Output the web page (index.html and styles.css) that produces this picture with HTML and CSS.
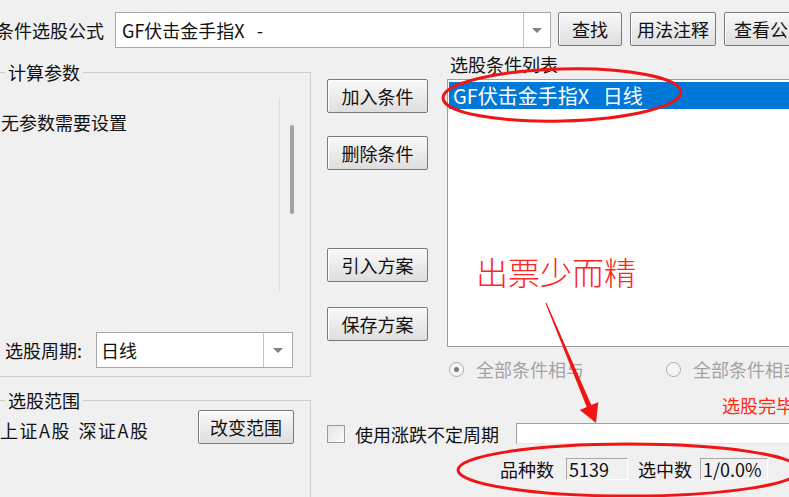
FILE: index.html
```html
<!DOCTYPE html>
<html lang="zh-CN">
<head>
    <meta charset="UTF-8">
    <meta name="viewport" content="width=device-width, initial-scale=1.0">
    <title>条件选股</title>
    <link rel="stylesheet" href="styles.css">
</head>
<body>
    <div class="top">
        <span class="top-label">条件选股公式</span>
        <div class="combo formula">
            <span class="combo-text">GF伏击金手指X&nbsp;&nbsp;&nbsp;-</span>
            <span class="combo-btn"><i class="tri"></i></span>
        </div>
        <button class="btn btn-find">查找</button>
        <button class="btn btn-note">用法注释</button>
        <button class="btn btn-view">查看公式</button>
    </div>

    <div class="main">
        <div class="left">
            <div class="group params">
                <span class="group-title">计算参数</span>
                <div class="param-area">
                    <div class="param-pane">无参数需要设置</div>
                    <div class="thumb"></div>
                </div>
                <div class="period-row">
                    <span class="period-label">选股周期:</span>
                    <div class="combo period">
                        <span class="combo-text">日线</span>
                        <span class="combo-btn"><i class="tri"></i></span>
                    </div>
                </div>
            </div>
            <div class="group range">
                <span class="group-title">选股范围</span>
                <div class="range-row">
                    <span class="range-text">上证A股 深证A股</span>
                    <button class="btn btn-range">改变范围</button>
                </div>
            </div>
        </div>

        <div class="right">
            <div class="upper">
                <div class="actions">
                    <button class="btn act-add">加入条件</button>
                    <button class="btn act-del">删除条件</button>
                    <button class="btn act-load">引入方案</button>
                    <button class="btn act-save">保存方案</button>
                </div>
                <div class="list-col">
                    <div class="list-label">选股条件列表</div>
                    <div class="list">
                        <div class="list-item selected">GF伏击金手指X&nbsp;&nbsp;&nbsp;日线</div>
                    </div>
                </div>
            </div>

            <div class="radios">
                <span class="radio checked"></span>
                <span class="radio-label first">全部条件相与</span>
                <span class="radio"></span>
                <span class="radio-label">全部条件相或</span>
            </div>

            <div class="done">选股完毕</div>

            <div class="check-row">
                <span class="checkbox"></span>
                <span class="check-label">使用涨跌不定周期</span>
                <span class="field"></span>
            </div>

            <div class="status-row">
                <span class="stat-label">品种数</span>
                <span class="stat-box total">5139</span>
                <span class="stat-label picked">选中数</span>
                <span class="stat-box ratio">1/0.0%</span>
            </div>
        </div>
    </div>

    <!-- 标注 -->
    <div class="note">出票少而精</div>
    <svg class="marks" width="789" height="497" viewBox="0 0 789 497">
        <ellipse cx="562" cy="95" rx="119" ry="26" fill="none" stroke="#f01414" stroke-width="3" transform="rotate(-1.5 562 95)"/>
        <ellipse cx="629" cy="470" rx="171" ry="26" fill="none" stroke="#f01414" stroke-width="3"/>
        <polygon points="545.5,303.2 546.5,302.8 591.3,405 598.3,402.2 596,423 579.8,409.9 586.7,407" fill="#f01414"/>
    </svg>
</body>
</html>
```

FILE: styles.css
```css
body {
    margin: 0;
    width: 789px;
    height: 497px;
    overflow: hidden;
    position: relative;
    background: #f0f0f0;
    font-family: "Noto Sans CJK SC", sans-serif;
    font-size: 18px;
    color: #111;
}
.top {
    display: flex;
    align-items: flex-start;
    height: 50px;
    padding-top: 12px;
    box-sizing: border-box;
}
.top > * {
    flex-shrink: 0;
}
.top-label {
    margin-left: -4px;
    width: 119px;
    line-height: 36px;
    white-space: nowrap;
}
.combo {
    display: flex;
    border: 1px solid #a8a8a8;
    background: #fff;
    box-sizing: border-box;
    height: 36px;
}
.combo-text {
    flex: 1;
    padding-left: 6px;
    line-height: 34px;
    white-space: nowrap;
}
.combo-btn {
    width: 26px;
    border-left: 1px solid #c4c4c4;
    display: flex;
    align-items: center;
    justify-content: center;
}
.tri {
    border-left: 5px solid transparent;
    border-right: 5px solid transparent;
    border-top: 5px solid #808080;
}
.formula {
    width: 436px;
}
.btn {
    font-family: inherit;
    font-size: 18px;
    color: #111;
    height: 34px;
    padding: 0;
    border: 1px solid #7a7a7a;
    border-radius: 2px;
    background: linear-gradient(#f9f9f9, #dedede);
    box-shadow: inset 1px 1px 0 #fff;
    line-height: 30px;
    white-space: nowrap;
}
.btn-find {
    margin-left: 7px;
    width: 64px;
}
.btn-note {
    margin-left: 8px;
    width: 86px;
}
.btn-view {
    margin-left: 8px;
    width: 92px;
}
.main {
    display: flex;
}
.left {
    width: 317px;
    margin-left: -6px;
    flex-shrink: 0;
}
.group {
    position: relative;
    border: 1px solid #cdcdcd;
    box-sizing: border-box;
}
.group-title {
    position: absolute;
    top: -12px;
    left: 10px;
    padding: 0 3px;
    background: #f0f0f0;
    line-height: 22px;
}
.params {
    margin-top: 22px;
    height: 305px;
}
.param-area {
    display: flex;
    margin-top: 25px;
}
.param-pane {
    width: 285px;
    height: 194px;
    border-right: 1px solid #dedede;
    padding: 13px 0 0 6px;
    box-sizing: border-box;
    line-height: 22px;
}
.thumb {
    width: 4px;
    height: 89px;
    margin: 27px 0 0 10px;
    background: #a2a2a2;
    border-radius: 2px;
}
.period-row {
    display: flex;
    align-items: center;
    margin-top: 40px;
    height: 36px;
}
.period-label {
    width: 101px;
    padding-left: 10px;
    box-sizing: border-box;
    flex-shrink: 0;
}
.period {
    width: 197px;
    flex-shrink: 0;
}
.period .combo-text {
    padding-left: 4px;
}
.period .combo-btn {
    width: 28px;
}
.range {
    margin-top: 23px;
    height: 140px;
}
.range-row {
    display: flex;
    align-items: flex-start;
    justify-content: space-between;
    padding: 9px 16px 0 5px;
}
.range-text {
    margin-top: 9px;
    line-height: 22px;
    letter-spacing: 1.5px;
    word-spacing: 2px;
    white-space: nowrap;
}
.btn-range {
    width: 96px;
}
.right {
    width: 520px;
    flex-shrink: 0;
}
.upper {
    display: flex;
    height: 297px;
}
.actions {
    width: 136px;
    flex-shrink: 0;
    display: flex;
    flex-direction: column;
    align-items: flex-start;
    padding-left: 16px;
    box-sizing: border-box;
}
.actions .btn {
    width: 101px;
}
.act-add {
    margin-top: 29px;
}
.act-del {
    margin-top: 23px;
}
.act-load {
    margin-top: 78px;
}
.act-save {
    margin-top: 25px;
}
.list-col {
    flex: 1;
}
.list-label {
    margin: 4px 0 0 3px;
    line-height: 20px;
}
.list {
    margin-top: 5px;
    height: 268px;
    border: 1px solid #9c9c9c;
    background: #fff;
    box-sizing: border-box;
    padding: 2px 0 0 1px;
}
.list-item {
    font-size: 20px;
    line-height: 27px;
    padding-left: 4px;
    white-space: nowrap;
}
.selected {
    background: #0078d7;
    color: #fff;
}
.radios {
    display: flex;
    align-items: center;
    height: 30px;
    margin-top: 7px;
    padding-left: 138px;
}
.radio {
    width: 15px;
    height: 15px;
    border-radius: 50%;
    border: 1px solid #ababab;
    background: #f6f6f6;
    box-sizing: border-box;
    flex-shrink: 0;
    position: relative;
}
.radio.checked::after {
    content: "";
    position: absolute;
    left: 4px;
    top: 4px;
    width: 5px;
    height: 5px;
    border-radius: 50%;
    background: #7a7a7a;
}
.radio-label {
    margin-left: 12px;
    color: #a3a3a3;
    white-space: nowrap;
}
.radio-label.first {
    width: 190px;
}
.done {
    margin-top: 10px;
    padding-left: 411px;
    color: #ff2a10;
    line-height: 22px;
    white-space: nowrap;
}
.check-row {
    display: flex;
    align-items: center;
    margin-top: 7px;
    height: 21px;
    padding-left: 16px;
}
.checkbox {
    width: 18px;
    height: 18px;
    border: 1px solid #9a9a9a;
    background: linear-gradient(135deg, #e2e2e2, #fdfdfd);
    box-sizing: border-box;
    flex-shrink: 0;
}
.check-label {
    margin-left: 10px;
    width: 161px;
    flex-shrink: 0;
    white-space: nowrap;
}
.field {
    width: 300px;
    height: 21px;
    border: 1px solid;
    border-color: #a0a0a0 #e6e6e6 #e6e6e6 #a0a0a0;
    background: #fff;
    box-sizing: border-box;
    flex-shrink: 0;
}
.status-row {
    display: flex;
    align-items: center;
    margin-top: 14px;
    height: 22px;
    padding-left: 189px;
}
.stat-label {
    width: 66px;
    flex-shrink: 0;
    white-space: nowrap;
}
.stat-label.picked {
    margin-left: 10px;
    width: 62px;
}
.stat-box {
    height: 22px;
    line-height: 20px;
    padding-left: 2px;
    border: 1px solid;
    border-color: #a8a8a8 #fff #fff #a8a8a8;
    box-sizing: border-box;
    flex-shrink: 0;
    white-space: nowrap;
}
.total {
    width: 62px;
}
.ratio {
    width: 68px;
}
.note {
    position: absolute;
    left: 476px;
    top: 255px;
    font-size: 32px;
    line-height: 32px;
    color: #ff2424;
    font-weight: 300;
    white-space: nowrap;
}
.marks {
    position: absolute;
    left: 0;
    top: 0;
    pointer-events: none;
}
```
